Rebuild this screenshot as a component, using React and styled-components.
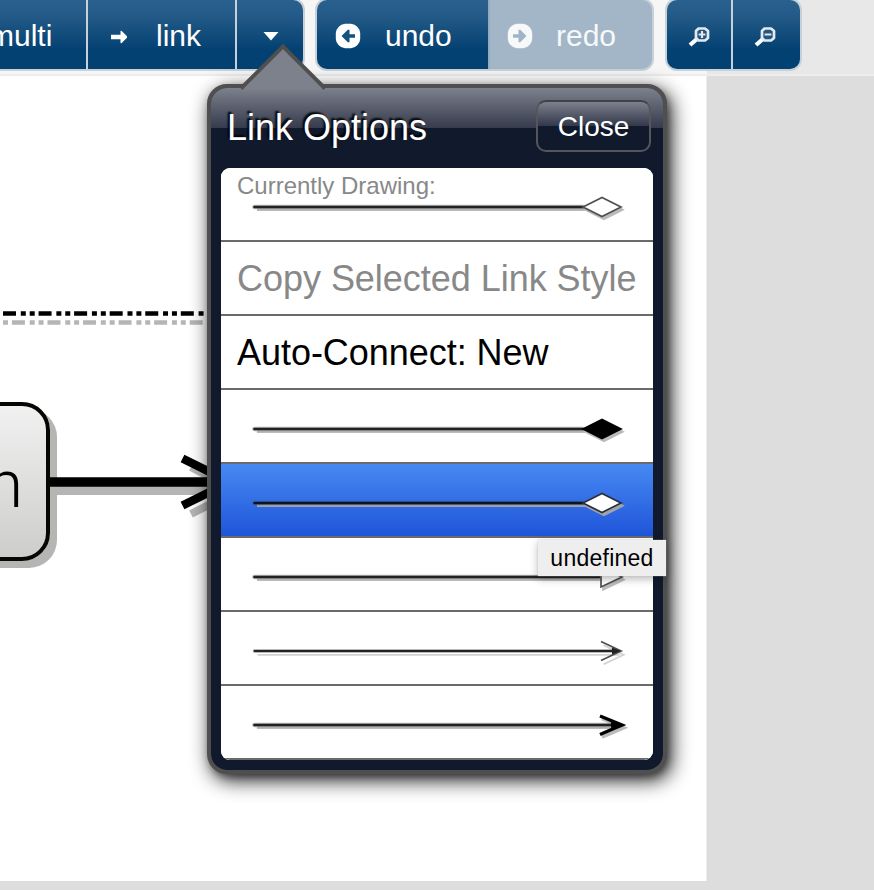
import React from "react";
import styled, { createGlobalStyle, css } from "styled-components";

const GlobalStyle = createGlobalStyle`
  * { box-sizing: border-box; }
  body {
    margin: 0;
    font-family: "Liberation Sans", Arial, sans-serif;
    background: #dedede;
  }
`;

const Page = styled.div`
  position: relative;
  width: 874px;
  height: 890px;
  overflow: hidden;
  background: #dddddd;
  display: flex;
  flex-direction: column;
`;

const Toolbar = styled.div`
  display: flex;
  align-items: flex-start;
  flex: none;
  height: 76px;
  border-bottom: 2px solid #ededed;
  background: linear-gradient(90deg, #f6f6f6 707px, #e8e8e8 707px);
`;

const ButtonGroup = styled.div`
  display: flex;
  flex: none;
  width: ${(p) => p.$width}px;
  height: 73px;
  margin-top: -2px;
  margin-left: ${(p) => p.$gap || 0}px;
  border: 2px solid #c9d1d8;
  border-radius: 12px;
  overflow: hidden;
  background: #c9d1d8;
  ${(p) =>
    p.$cut &&
    css`
      border-left: 0;
      border-top-left-radius: 0;
      border-bottom-left-radius: 0;
    `}
`;

const ToolButton = styled.button`
  display: flex;
  align-items: center;
  flex: none;
  width: ${(p) => p.$width}px;
  height: 69px;
  margin: 0 ${(p) => p.$sep ?? 2}px 0 0;
  padding: 0 0 0 ${(p) => p.$pad || 0}px;
  border: 0;
  color: #fff;
  font: 30px "Liberation Sans", Arial, sans-serif;
  white-space: nowrap;
  background: linear-gradient(#2a608d 0, #255b88 14px, #034172 50px, #034172);
  ${(p) =>
    p.$disabled &&
    css`
      color: #f7f8f9;
      background: #a2b6c8;
      border-left: 2px solid #94acc0;
    `}
`;

const Label = styled.span`
  margin-left: ${(p) => p.$left}px;
  padding-top: 3px;
`;

const ToolIcon = styled.svg`
  display: block;
  flex: none;
  margin-top: ${(p) => p.$drop || 0}px;
`;

const Canvas = styled.div`
  position: relative;
  flex: none;
  width: 707px;
  height: 805px;
  background: #fff;
  border-right: 1px solid #ededed;
  overflow: hidden;
`;

const Diagram = styled.svg`
  position: absolute;
  left: 0;
  top: 0;
`;

const Node = styled.div`
  position: absolute;
  left: -150px;
  top: 326px;
  width: 200px;
  height: 159px;
  padding: 6px 23px 0 0;
  display: flex;
  align-items: center;
  justify-content: flex-end;
  border: 4px solid #050702;
  border-radius: 28px;
  background: linear-gradient(#f1f1f1, #cdcdcb);
  box-shadow: 7px 7px 0 #b5b5b3;
  font: 300 66px Roboto, "Liberation Sans", sans-serif;
  color: #000;
`;

const Popover = styled.div`
  position: absolute;
  left: 207px;
  top: 84px;
  width: 460px;
  height: 690px;
  padding: 0 10px;
  border: 4px solid #4f4f4f;
  border-radius: 20px;
  background: linear-gradient(#7d818c 0, #363b4d 40px, #111a2d 40px) padding-box, #4f4f4f;
  box-shadow: 4px 6px 20px rgba(0, 0, 0, 0.9), 2px 3px 6px rgba(0, 0, 0, 0.25);
`;

const Pointer = styled.svg`
  position: absolute;
  left: 26px;
  top: -47px;
`;

const Header = styled.div`
  display: flex;
  align-items: center;
  justify-content: space-between;
  height: 80px;
  padding: 0 2px 0 6px;
`;

const Title = styled.div`
  font-size: 36px;
  color: #fff;
  white-space: nowrap;
  text-shadow: -2px -2px 2px #000;
`;

const CloseButton = styled.button`
  width: 115px;
  height: 52px;
  margin-top: -5px;
  padding: 2px 0 0;
  border: 2px solid #55565b;
  border-top-color: #404249;
  border-radius: 10px;
  color: #fff;
  font: 28px "Liberation Sans", Arial, sans-serif;
  background: linear-gradient(#7d818c 0, #32374a 24px, #111a2d 24px);
  background-origin: padding-box;
`;

const List = styled.div`
  display: flex;
  flex-direction: column;
  border-radius: 9px;
  overflow: hidden;
  background: #fff;
`;

const Row = styled.div`
  display: flex;
  flex-direction: column;
  justify-content: center;
  position: relative;
  height: 74px;
  padding: 1px 16px 0;
  border-bottom: 2px solid #6a6a6a;
  font-size: 36px;
  white-space: nowrap;
  color: ${(p) => (p.$muted ? "#888" : "#000")};
  letter-spacing: ${(p) => p.$track || 0}px;
  background: ${(p) => (p.$selected ? "linear-gradient(#4689f2, #1f55d9)" : "#fff")};
`;

const Caption = styled.div`
  position: absolute;
  left: 16px;
  top: 4px;
  font-size: 24px;
  line-height: 28px;
  color: #888;
`;

const Sample = styled.svg`
  display: block;
  margin: 5px 0 0 14px;
  overflow: visible;
`;

const Tooltip = styled.div`
  position: absolute;
  left: 538px;
  top: 540px;
  width: 128px;
  height: 36px;
  padding-top: 1px;
  display: flex;
  align-items: center;
  justify-content: center;
  background: #eeeeee;
  box-shadow: 0 0 1px #bbb, 0 3px 8px rgba(0, 0, 0, 0.28);
  font-size: 23px;
  letter-spacing: 0.25px;
  color: #000;
`;

function LinkSample({ kind, selected }) {
  const thin = kind === "thin";
  const stroke = thin ? 1.8 : 2.6;
  const isDiamond = kind === "open" || kind === "filled";
  const end = isDiamond ? 332 : kind === "triangle" ? 348 : 366;
  const shade = selected ? "#a3a3ab" : thin ? "#d3d0d0" : "#bbb";
  const offset = thin ? 3.8 : 2.8;
  const soft = kind === "open" && selected ? "#2a2f3a" : "#505050";
  const head = (color, fill) => {
    if (isDiamond)
      return <path d="M332 12 351 2.500 370 12 351 21.500Z" fill={fill} stroke={color} strokeWidth="1.7" />;
    if (kind === "triangle")
      return <path d="M350 2 371 12 350 22Z" fill={fill} stroke={color} strokeWidth="1.7" />;
    return (
      <path d={thin ? "M350 2.5 370 12 350 21.5" : "M349 3 371 12 349 21.500"} fill="none" stroke={color} strokeWidth={thin ? 1.8 : 3.4} />
    );
  };
  return (
    <Sample width="386" height="24" viewBox="0 0 386 24">
      <g transform={`translate(${offset * 0.7} ${offset})`}>
        <path d={`M4 12H${end}`} stroke={shade} strokeWidth={stroke} />
        {head(shade, kind === "thin" || kind === "thick" ? "none" : shade)}
      </g>
      <path d={`M3.500 12H${end}`} stroke="#555" strokeWidth={stroke + 2} opacity=".4" strokeLinecap="round" />
      <path d={`M3.500 12H${end}`} stroke={selected ? "#091426" : "#222"} strokeWidth={stroke} strokeLinecap="round" />
      {head(kind === "filled" || kind === "thick" ? "#000" : soft, kind === "filled" ? "#000" : "#fff")}
      {thin && <path d="m361 8.500 9 3.500-9 3.500Z" fill="#222" />}
      {kind === "thick" && <path d="m360 9 12 3-12 3Z" fill="#000" />}
    </Sample>
  );
}

function ArrowIcon() {
  return (
    <ToolIcon width="18" height="14" viewBox="0 0 18 14" $drop={5}>
      <path d="M1 4.800h9.500V1.400q0-1 1.200-.4L17 6.200v1.600L11.700 13q-1.200.6-1.200-.4V9.200H1Z" fill="#fff" />
    </ToolIcon>
  );
}

function CircleArrowIcon({ flip, color, hole }) {
  return (
    <ToolIcon width="26" height="26" viewBox="0 0 26 26" $drop={2}>
      <g transform={flip ? "translate(26 0) scale(-1 1)" : undefined}>
        <path d="M10 .8h6Q20 1 22.500 4 25.200 7 25.200 10v6q0 3-2.700 6-2.500 3-6.500 3.200h-6Q6 25 3.500 22 .8 19 .8 16v-6Q.8 7 3.500 4 6 1 10 .8Z" fill={color} />
        <path d="m6.500 13 6.300-6.200h1.700V11.200H20v3.600h-5.500v4.400h-1.700Z" fill={hole} />
      </g>
    </ToolIcon>
  );
}

function MagnifierIcon({ plus }) {
  return (
    <ToolIcon width="22" height="22" viewBox="0 0 22 22" $drop={4}>
      <path d="m9.500 12.500-7.500 6.500" stroke="#fff" strokeWidth="4.200" />
      <path d="M10.500 2.500h6.500l3 2.500v7l-3 2.500h-6.500L8 12V5Z" fill="#255480" stroke="#e2eaf1" strokeWidth="2.700" strokeLinejoin="round" />
      <path d={plus ? "M10.600 8.500h6.800M14 5.100v6.800" : "M10.600 8.500h6.800"} stroke="#dde7ef" strokeWidth="2.200" />
    </ToolIcon>
  );
}

export default function App() {
  return (
    <Page>
      <GlobalStyle />
      <Toolbar>
        <ButtonGroup $width={305} $cut>
          <ToolButton $width={86}>
            <Label $left={-11}>multi</Label>
          </ToolButton>
          <ToolButton $width={147} $pad={22}>
            <ArrowIcon />
            <Label $left={28}>link</Label>
          </ToolButton>
          <ToolButton $width={66} $pad={26} $sep={0}>
            <ToolIcon width="16" height="10" viewBox="0 0 16 10" $drop={2}>
              <path d="M.5 1h15L8 9.500Z" fill="#fff" />
            </ToolIcon>
          </ToolButton>
        </ButtonGroup>
        <ButtonGroup $width={339} $gap={10}>
          <ToolButton $width={171} $pad={18} $sep={0}>
            <CircleArrowIcon color="#fff" hole="#15517f" />
            <Label $left={24}>undo</Label>
          </ToolButton>
          <ToolButton $width={164} $pad={17} $sep={0} $disabled>
            <CircleArrowIcon flip color="#f7f8f9" hole="#9fb4c6" />
            <Label $left={23}>redo</Label>
          </ToolButton>
        </ButtonGroup>
        <ButtonGroup $width={137} $gap={11}>
          <ToolButton $width={64} $pad={21}>
            <MagnifierIcon plus />
          </ToolButton>
          <ToolButton $width={67} $pad={21} $sep={0}>
            <MagnifierIcon />
          </ToolButton>
        </ButtonGroup>
      </Toolbar>

      <Canvas>
        <Diagram width="706" height="805" viewBox="0 76 706 805">
          <path d="M3 313.500H204" stroke="#000" strokeWidth="4.500" strokeDasharray="13 4.800 5 3.900 5 3.860" />
          <path d="M3 322.500H204" stroke="#b5b5b5" strokeWidth="4.500" strokeDasharray="5 3.900 13 4.800 5 3.860" />
          <path d="M50 490.500H215" stroke="#b5b5b5" strokeWidth="9" />
          <path d="m191 467 45 24-45 23" fill="none" stroke="#b5b5b5" strokeWidth="8" />
        </Diagram>
        <Node>n</Node>
        <Diagram width="706" height="805" viewBox="0 76 706 805">
          <path d="M50 482H230" stroke="#000" strokeWidth="9.500" />
          <path d="m182.500 458.500 47.500 23.500-47.500 23.500" fill="none" stroke="#000" strokeWidth="8.500" />
        </Diagram>
      </Canvas>

      <Popover>
        <Pointer width="96" height="52" viewBox="0 0 96 52">
          <path d="M4 47 46 6 88 47Z" fill="#7d818c" />
          <path d="M4 47.500 46 5.500 88 47.500" fill="none" stroke="#4f4f4f" strokeWidth="4" />
          <path d="M7 47.500 46 8.300 85 47.500Z" fill="#7d818c" />
        </Pointer>
        <Header>
          <Title>Link Options</Title>
          <CloseButton>Close</CloseButton>
        </Header>
        <List>
          <Row>
            <Caption>Currently Drawing:</Caption>
            <LinkSample kind="open" />
          </Row>
          <Row $muted $track={-0.03}>Copy Selected Link Style</Row>
          <Row $track={-0.04}>Auto-Connect: New</Row>
          <Row><LinkSample kind="filled" /></Row>
          <Row $selected><LinkSample kind="open" selected /></Row>
          <Row><LinkSample kind="triangle" /></Row>
          <Row><LinkSample kind="thin" /></Row>
          <Row><LinkSample kind="thick" /></Row>
        </List>
      </Popover>
      <Tooltip>undefined</Tooltip>
    </Page>
  );
}
